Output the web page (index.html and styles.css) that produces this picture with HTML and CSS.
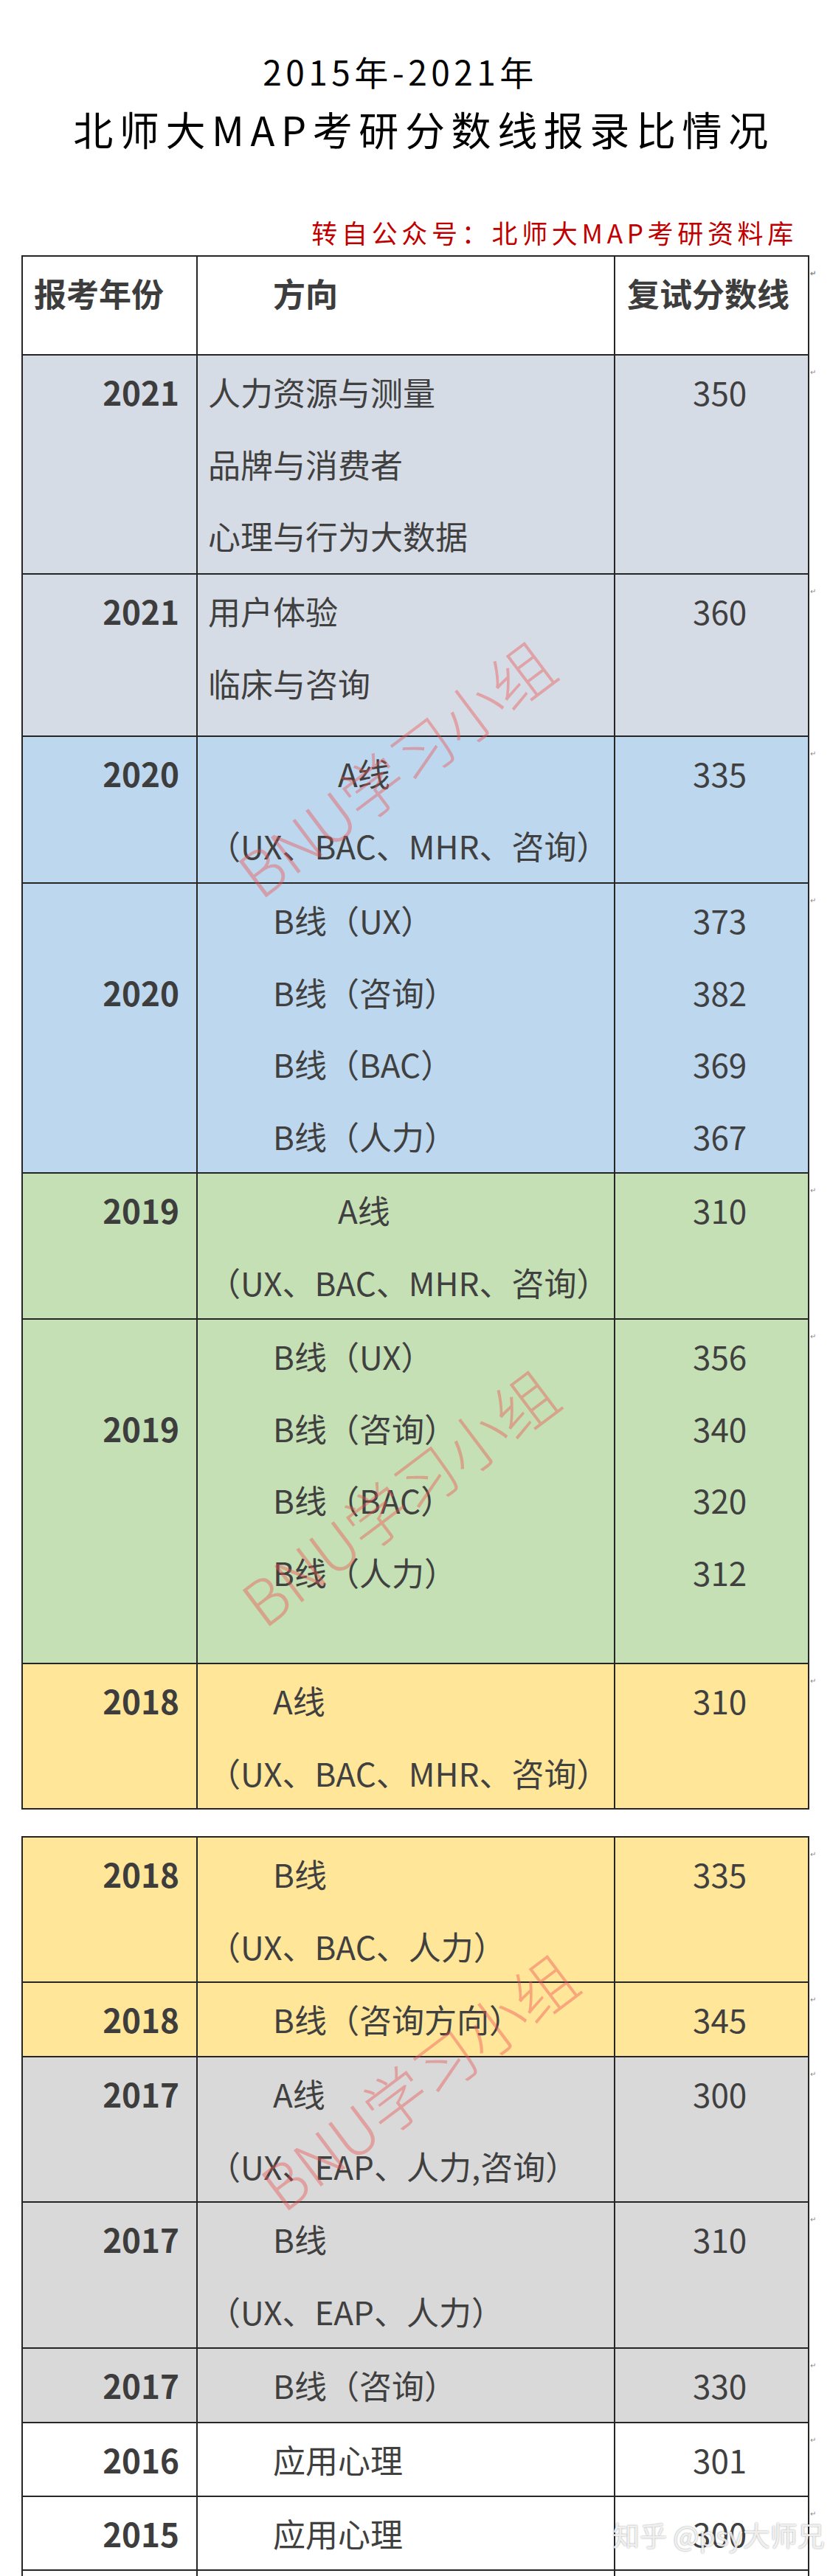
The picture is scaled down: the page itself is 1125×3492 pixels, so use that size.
FILE: index.html
```html
<!DOCTYPE html>
<html lang="zh-CN">
<head>
<meta charset="utf-8">
<title>北师大MAP考研分数线报录比情况</title>
<link rel="stylesheet" href="styles.css">
</head>
<body>
<div class="page">
  <h1 class="t1">2015年-2021年</h1>
  <h1 class="t2">北师大MAP考研分数线报录比情况</h1>
  <p class="src">转自公众号：北师大MAP考研资料库</p>

  <table class="grid">
    <colgroup><col class="c1"><col class="c2"><col class="c3"></colgroup>
    <tr class="h-head">
      <th class="year-h"><div class="ln">报考年份</div></th>
      <th class="dir-h"><div class="ln i2">方向</div></th>
      <th class="score-h"><div class="ln">复试分数线</div></th>
    </tr>
    <tr class="h-297 bg-2021">
      <td class="year"><div class="ln">2021</div></td>
      <td class="dir"><div class="ln">人力资源与测量</div><div class="ln">品牌与消费者</div><div class="ln">心理与行为大数据</div></td>
      <td class="score"><div class="ln">350</div></td>
    </tr>
    <tr class="h-220 bg-2021">
      <td class="year"><div class="ln">2021</div></td>
      <td class="dir"><div class="ln">用户体验</div><div class="ln">临床与咨询</div></td>
      <td class="score"><div class="ln">360</div></td>
    </tr>
    <tr class="h-199 bg-2020">
      <td class="year"><div class="ln">2020</div></td>
      <td class="dir"><div class="ln i4">A线</div><div class="ln">（UX、BAC、MHR、咨询）</div></td>
      <td class="score"><div class="ln">335</div></td>
    </tr>
    <tr class="h-393 bg-2020">
      <td class="year year-l2"><div class="ln">2020</div></td>
      <td class="dir"><div class="ln i2">B线（UX）</div><div class="ln i2">B线（咨询）</div><div class="ln i2">B线（BAC）</div><div class="ln i2">B线（人力）</div></td>
      <td class="score"><div class="ln">373</div><div class="ln">382</div><div class="ln">369</div><div class="ln">367</div></td>
    </tr>
    <tr class="h-198 bg-2019">
      <td class="year"><div class="ln">2019</div></td>
      <td class="dir"><div class="ln i4">A线</div><div class="ln">（UX、BAC、MHR、咨询）</div></td>
      <td class="score"><div class="ln">310</div></td>
    </tr>
    <tr class="h-467 bg-2019">
      <td class="year year-l2"><div class="ln">2019</div></td>
      <td class="dir"><div class="ln i2">B线（UX）</div><div class="ln i2">B线（咨询）</div><div class="ln i2">B线（BAC）</div><div class="ln i2">B线（人力）</div></td>
      <td class="score"><div class="ln">356</div><div class="ln">340</div><div class="ln">320</div><div class="ln">312</div></td>
    </tr>
    <tr class="h-197 bg-2018">
      <td class="year"><div class="ln">2018</div></td>
      <td class="dir"><div class="ln i2">A线</div><div class="ln">（UX、BAC、MHR、咨询）</div></td>
      <td class="score"><div class="ln">310</div></td>
    </tr>
  </table>

  <table class="grid grid-2">
    <colgroup><col class="c1"><col class="c2"><col class="c3"></colgroup>
    <tr class="h-197 bg-2018">
      <td class="year"><div class="ln">2018</div></td>
      <td class="dir"><div class="ln i2">B线</div><div class="ln">（UX、BAC、人力）</div></td>
      <td class="score"><div class="ln">335</div></td>
    </tr>
    <tr class="h-101 bg-2018">
      <td class="year"><div class="ln">2018</div></td>
      <td class="dir"><div class="ln i2">B线（咨询方向）</div></td>
      <td class="score"><div class="ln">345</div></td>
    </tr>
    <tr class="h-197 bg-2017">
      <td class="year"><div class="ln">2017</div></td>
      <td class="dir"><div class="ln i2">A线</div><div class="ln">（UX、EAP、人力,咨询）</div></td>
      <td class="score"><div class="ln">300</div></td>
    </tr>
    <tr class="h-198 bg-2017">
      <td class="year"><div class="ln">2017</div></td>
      <td class="dir"><div class="ln i2">B线</div><div class="ln">（UX、EAP、人力）</div></td>
      <td class="score"><div class="ln">310</div></td>
    </tr>
    <tr class="h-101 bg-2017">
      <td class="year"><div class="ln">2017</div></td>
      <td class="dir"><div class="ln i2">B线（咨询）</div></td>
      <td class="score"><div class="ln">330</div></td>
    </tr>
    <tr class="h-99">
      <td class="year"><div class="ln">2016</div></td>
      <td class="dir"><div class="ln i2">应用心理</div></td>
      <td class="score"><div class="ln">301</div></td>
    </tr>
    <tr class="h-100">
      <td class="year"><div class="ln">2015</div></td>
      <td class="dir"><div class="ln i2">应用心理</div></td>
      <td class="score"><div class="ln">300</div></td>
    </tr>
    <tr class="h-tail">
      <td class="tail"></td>
      <td class="tail"></td>
      <td class="tail tail-last"></td>
    </tr>
  </table>

  <div class="wm wm1">BNU学习小组</div>
  <div class="wm wm2">BNU学习小组</div>
  <div class="wm wm3">BNU学习小组</div>
  <div class="zhihu">知乎 @psy大师兄</div>
</div>
</body>
</html>
```

FILE: styles.css
```css
* { box-sizing: border-box; }

html, body {
  margin: 0;
  padding: 0;
  background: #ffffff;
}

body {
  font-family: "Noto Sans CJK SC", "Noto Sans", sans-serif;
  color: #404040;
}

.page {
  position: relative;
  width: 1125px;
  height: 3492px;
  overflow: hidden;
}

.t1 {
  margin: 0;
  padding: 66px 40px 0 0;
  font-size: 46px;
  line-height: 60px;
  font-weight: 400;
  letter-spacing: 5.5px;
  color: #000;
  text-align: center;
}

.t2 {
  margin: 14px 0 0 0;
  padding: 0 0 0 24px;
  font-size: 54px;
  line-height: 70px;
  font-weight: 400;
  letter-spacing: 8.6px;
  color: #000;
  text-align: center;
}

.src {
  margin: 80px 0 0 0;
  padding-right: 44px;
  font-size: 35px;
  line-height: 50px;
  letter-spacing: 5.7px;
  color: #c00000;
  text-align: right;
}

.grid {
  margin: 6px 0 0 29px;
  width: 1068px;
  table-layout: fixed;
  border-collapse: separate;
  border-spacing: 0;
  border-top: 2px solid #262626;
  border-left: 2px solid #262626;
}

.grid-2 { margin-top: 36px; }

.c1 { width: 237px; }
.c2 { width: 566px; }
.c3 { width: 263px; }

.grid th,
.grid td {
  position: relative;
  padding: 0;
  vertical-align: top;
  border-right: 2px solid #262626;
  border-bottom: 2px solid #262626;
  font-size: 44px;
  line-height: 20px;
  white-space: nowrap;
  text-align: left;
}

.grid td.score::after,
.grid th.score-h::after {
  content: "\21B5";
  position: absolute;
  right: -11px;
  top: 16px;
  font-size: 10px;
  line-height: 12px;
  color: #8a8a8a;
}

.grid th {
  font-weight: 700;
  color: #3d3d3d;
}

.year-h { padding-left: 15px !important; }
.dir-h { padding-left: 14px !important; }
.score-h { padding-left: 16px !important; }

.ln {
  height: 97.5px;
  line-height: 98px;
}
.i2 { padding-left: 88px; }
.i4 { padding-left: 176px; }

.year {
  text-align: right !important;
  padding-right: 23px !important;
  font-weight: 700;
  color: #3d3d3d;
}
.year-l2 { padding-top: 97.5px !important; }

.dir { padding-left: 14px !important; }
.score { padding-left: 105px !important; }

.h-head { height: 134px; }
.h-297 { height: 297px; }
.h-220 { height: 220px; }
.h-199 { height: 199px; }
.h-393 { height: 393px; }
.h-198 { height: 198px; }
.h-467 { height: 467px; }
.h-197 { height: 197px; }
.h-101 { height: 101px; }
.h-99 { height: 99px; }
.h-100 { height: 100px; }
.h-tail { height: 8px; }

.grid td.tail {
  border-bottom: 0;
  line-height: 8px;
  font-size: 8px;
}
.grid td.tail-last::after { content: none; }

.bg-2021 td { background: #d6dce5; }
.bg-2020 td { background: #bdd7ee; }
.bg-2019 td { background: #c5e0b4; }
.bg-2018 td { background: #ffe699; }
.bg-2017 td { background: #d9d9d9; }

.wm {
  position: absolute;
  font-size: 84px;
  font-weight: 300;
  line-height: 1;
  white-space: nowrap;
  color: rgba(236, 80, 80, 0.42);
  transform: translate(-50%, -50%) rotate(-37deg);
  pointer-events: none;
}
.wm1 { left: 535px; top: 1040px; }
.wm2 { left: 540px; top: 2028px; }
.wm3 { left: 566px; top: 2820px; }

.zhihu {
  position: absolute;
  left: 830px;
  top: 3413px;
  font-size: 37px;
  line-height: 46px;
  white-space: nowrap;
  color: rgba(255, 255, 255, 0.85);
  text-shadow: 0 0 2px rgba(0, 0, 0, 0.45);
  pointer-events: none;
}
```
